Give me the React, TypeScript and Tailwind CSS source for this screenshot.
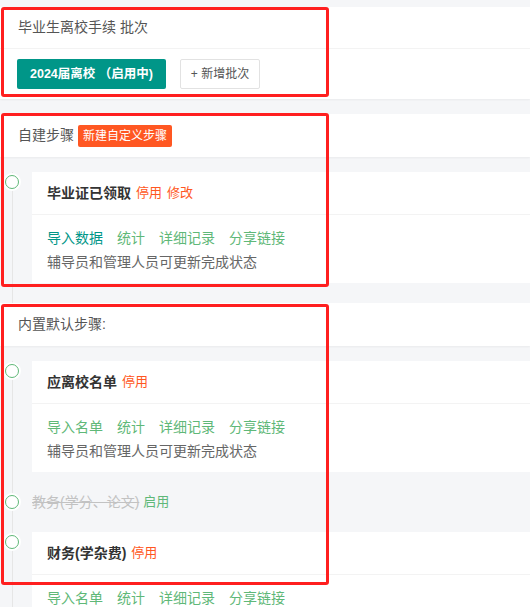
import React from "react";

const font = { fontFamily: '"Liberation Sans", "Noto Sans CJK SC", sans-serif' };

type Step = {
  title: string;
  actions?: { label: string; cls: string }[];
  importLabel?: string;
  importCls?: string;
};

function Dot() {
  return (
    <span className="absolute left-[5px] top-[3px] h-[14px] w-[14px] rounded-full border-[1.5px] border-[#5FB878] bg-white shadow-[0_0_0_2px_#ffffff]" />
  );
}

function StepCard({ step }: { step: Step }) {
  return (
    <div className="bg-white">
      <div className="flex h-[43px] items-center border-b border-[#f3f3f3] px-[15px]">
        <span className="text-[14px] font-bold text-[#333]">{step.title}</span>
        {step.actions?.map((a) => (
          <span key={a.label} className={`ml-[5px] text-[13px] ${a.cls}`}>
            {a.label}
          </span>
        ))}
      </div>
      <div className="px-[15px] pt-[11px] pb-[9px] text-[14px] leading-[24px]">
        <div className="flex gap-[14px]">
          <span className={step.importCls}>{step.importLabel}</span>
          <span className="text-[#5FB878]">统计</span>
          <span className="text-[#5FB878]">详细记录</span>
          <span className="text-[#5FB878]">分享链接</span>
        </div>
        <div className="text-[#666]">辅导员和管理人员可更新完成状态</div>
      </div>
    </div>
  );
}

function TimelineItem({ children, last }: { children: React.ReactNode; last?: boolean }) {
  return (
    <div className={`relative pl-[32px] ${last ? "" : "pb-[20px]"}`}>
      <span className="absolute left-[12px] top-0 bottom-0 w-px bg-[#e6e6e6]" />
      <div className="relative">
        <span className="absolute -left-[32px] top-0 h-[20px] w-[20px]">
          <Dot />
        </span>
      </div>
      {children}
    </div>
  );
}

export default function App() {
  return (
    <div className="relative h-[607px] w-[530px] overflow-hidden bg-[#f5f6f8] pt-[7px]" style={font}>
      {/* 批次 */}
      <div className="bg-white shadow-[0_1px_2px_0_rgba(0,0,0,0.05)]">
        <div className="flex h-[42px] items-center border-b border-[#f3f3f3] pl-[18px] text-[14px] text-[#555]">
          毕业生离校手续 批次
        </div>
        <div className="flex items-center gap-[14px] py-[10px] pl-[17px]">
          <button className="flex h-[30px] w-[149px] items-center justify-center rounded-[2px] bg-[#009688] text-[12.5px] font-bold text-white">
            2024届离校 （启用中)
          </button>
          <button className="flex h-[30px] w-[80px] items-center justify-center rounded-[2px] border border-[#e2e2e2] bg-white text-[12px] text-[#555]">
            + 新增批次
          </button>
        </div>
      </div>

      {/* 自建步骤 */}
      <div className="mt-[15px] flex h-[43px] items-center bg-white pl-[18px] shadow-[0_1px_2px_0_rgba(0,0,0,0.05)]">
        <span className="text-[14px] text-[#555]">自建步骤</span>
        <span className="ml-[4px] flex h-[22px] items-center rounded-[2px] bg-[#FF5722] px-[5px] text-[12px] text-white">
          新建自定义步骤
        </span>
      </div>
      <div className="pt-[15px]">
        <TimelineItem>
          <StepCard
            step={{
              title: "毕业证已领取",
              actions: [
                { label: "停用", cls: "text-[#FF5722]" },
                { label: "修改", cls: "text-[#FF5722]" },
              ],
              importLabel: "导入数据",
              importCls: "text-[#009688]",
            }}
          />
        </TimelineItem>
      </div>

      {/* 内置默认步骤 */}
      <div className="flex h-[43px] items-center bg-white pl-[18px] text-[14px] text-[#555] shadow-[0_1px_2px_0_rgba(0,0,0,0.05)]">
        内置默认步骤:
      </div>
      <div className="pt-[15px]">
        <TimelineItem>
          <StepCard
            step={{
              title: "应离校名单",
              actions: [{ label: "停用", cls: "text-[#FF5722]" }],
              importLabel: "导入名单",
              importCls: "text-[#5FB878]",
            }}
          />
        </TimelineItem>
        <TimelineItem>
          <div className="flex h-[20px] items-center text-[14px]">
            <span className="text-[#c2c2c2] line-through">教务(学分、论文)</span>
            <span className="ml-[4px] text-[13px] text-[#5FB878]">启用</span>
          </div>
        </TimelineItem>
        <TimelineItem last>
          <StepCard
            step={{
              title: "财务(学杂费)",
              actions: [{ label: "停用", cls: "text-[#FF5722]" }],
              importLabel: "导入名单",
              importCls: "text-[#5FB878]",
            }}
          />
        </TimelineItem>
      </div>

      {/* annotation boxes */}
      <div className="pointer-events-none absolute left-[1px] top-[7px] h-[90px] w-[328px] rounded-[3px] border-[3px] border-[#ff1f1f]" />
      <div className="pointer-events-none absolute left-[1px] top-[113px] h-[174px] w-[328px] rounded-[3px] border-[3px] border-[#ff1f1f]" />
      <div className="pointer-events-none absolute left-[1px] top-[304px] h-[281px] w-[328px] rounded-[3px] border-[3px] border-[#ff1f1f]" />
    </div>
  );
}
